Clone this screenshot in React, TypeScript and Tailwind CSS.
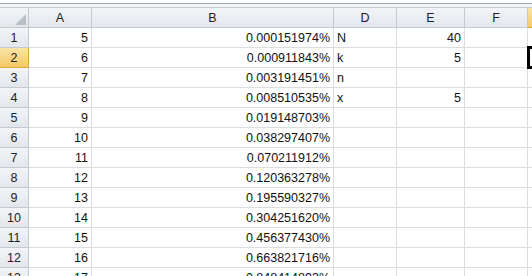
import React from 'react';

const cols = ['A', 'B', 'D', 'E', 'F', 'G'];

type Row = [string, string, string, string];

const rows: Row[] = [
  ['5', '0.000151974%', 'N', '40'],
  ['6', '0.000911843%', 'k', '5'],
  ['7', '0.003191451%', 'n', ''],
  ['8', '0.008510535%', 'x', '5'],
  ['9', '0.019148703%', '', ''],
  ['10', '0.038297407%', '', ''],
  ['11', '0.070211912%', '', ''],
  ['12', '0.120363278%', '', ''],
  ['13', '0.195590327%', '', ''],
  ['14', '0.304251620%', '', ''],
  ['15', '0.456377430%', '', ''],
  ['16', '0.663821716%', '', ''],
  ['17', '0.848414893%', '', ''],
];

const cell = 'h-[20px] border-r border-b border-[#dadcdd] bg-white px-[3px] leading-[20px] whitespace-nowrap overflow-hidden';
const head = 'h-[20px] border-r border-b border-[#c5c9cf] bg-gradient-to-b from-[#f2f4f7] to-[#e3e7ec] text-center leading-[20px] text-[#222]';
const selHead = 'h-[20px] border-r border-b border-[#d9a940] bg-gradient-to-b from-[#fbe4a6] to-[#f4c964] text-center leading-[20px] text-[#222]';

export default function App() {
  return (
    <div
      className="relative w-[532px] h-[276px] overflow-hidden bg-white text-[12.5px] text-[#111]"
      style={{ fontFamily: '"Liberation Sans", Arial, sans-serif' }}
    >
      {/* bottom edge of the formula bar */}
      <div className="h-[3px] bg-white" />
      <div className="h-px bg-[#a3a9b1]" />
      <div className="h-[3px] bg-[#f4f5f7]" />

      <div className="grid grid-cols-[29px_63px_242px_63px_68px_63px_1fr] border-t border-[#c5c9cf]">
        <div className={`${head} relative`}>
          <span className="absolute right-[2px] bottom-[2px] w-0 h-0 border-l-[11px] border-l-transparent border-b-[11px] border-b-[#b9bfc7]" />
        </div>
        {cols.map((c) => (
          <div key={c} className={c === 'G' ? selHead : head}>
            {c === 'G' ? '' : c === 'D' ? 'D' : c}
          </div>
        ))}

        {rows.map((r, i) => (
          <React.Fragment key={i}>
            <div className={i === 1 ? selHead : head}>{i + 1}</div>
            <div className={`${cell} text-right`}>{r[0]}</div>
            <div className={`${cell} text-right`}>{r[1]}</div>
            <div className={`${cell} text-left`}>{r[2]}</div>
            <div className={`${cell} text-right`}>{r[3]}</div>
            <div className={cell} />
            <div className={cell} />
          </React.Fragment>
        ))}
      </div>

      {/* active cell G2 */}
      <div className="absolute left-[527px] top-[46px] w-[20px] h-[23px] border-[3px] border-black" />
    </div>
  );
}
